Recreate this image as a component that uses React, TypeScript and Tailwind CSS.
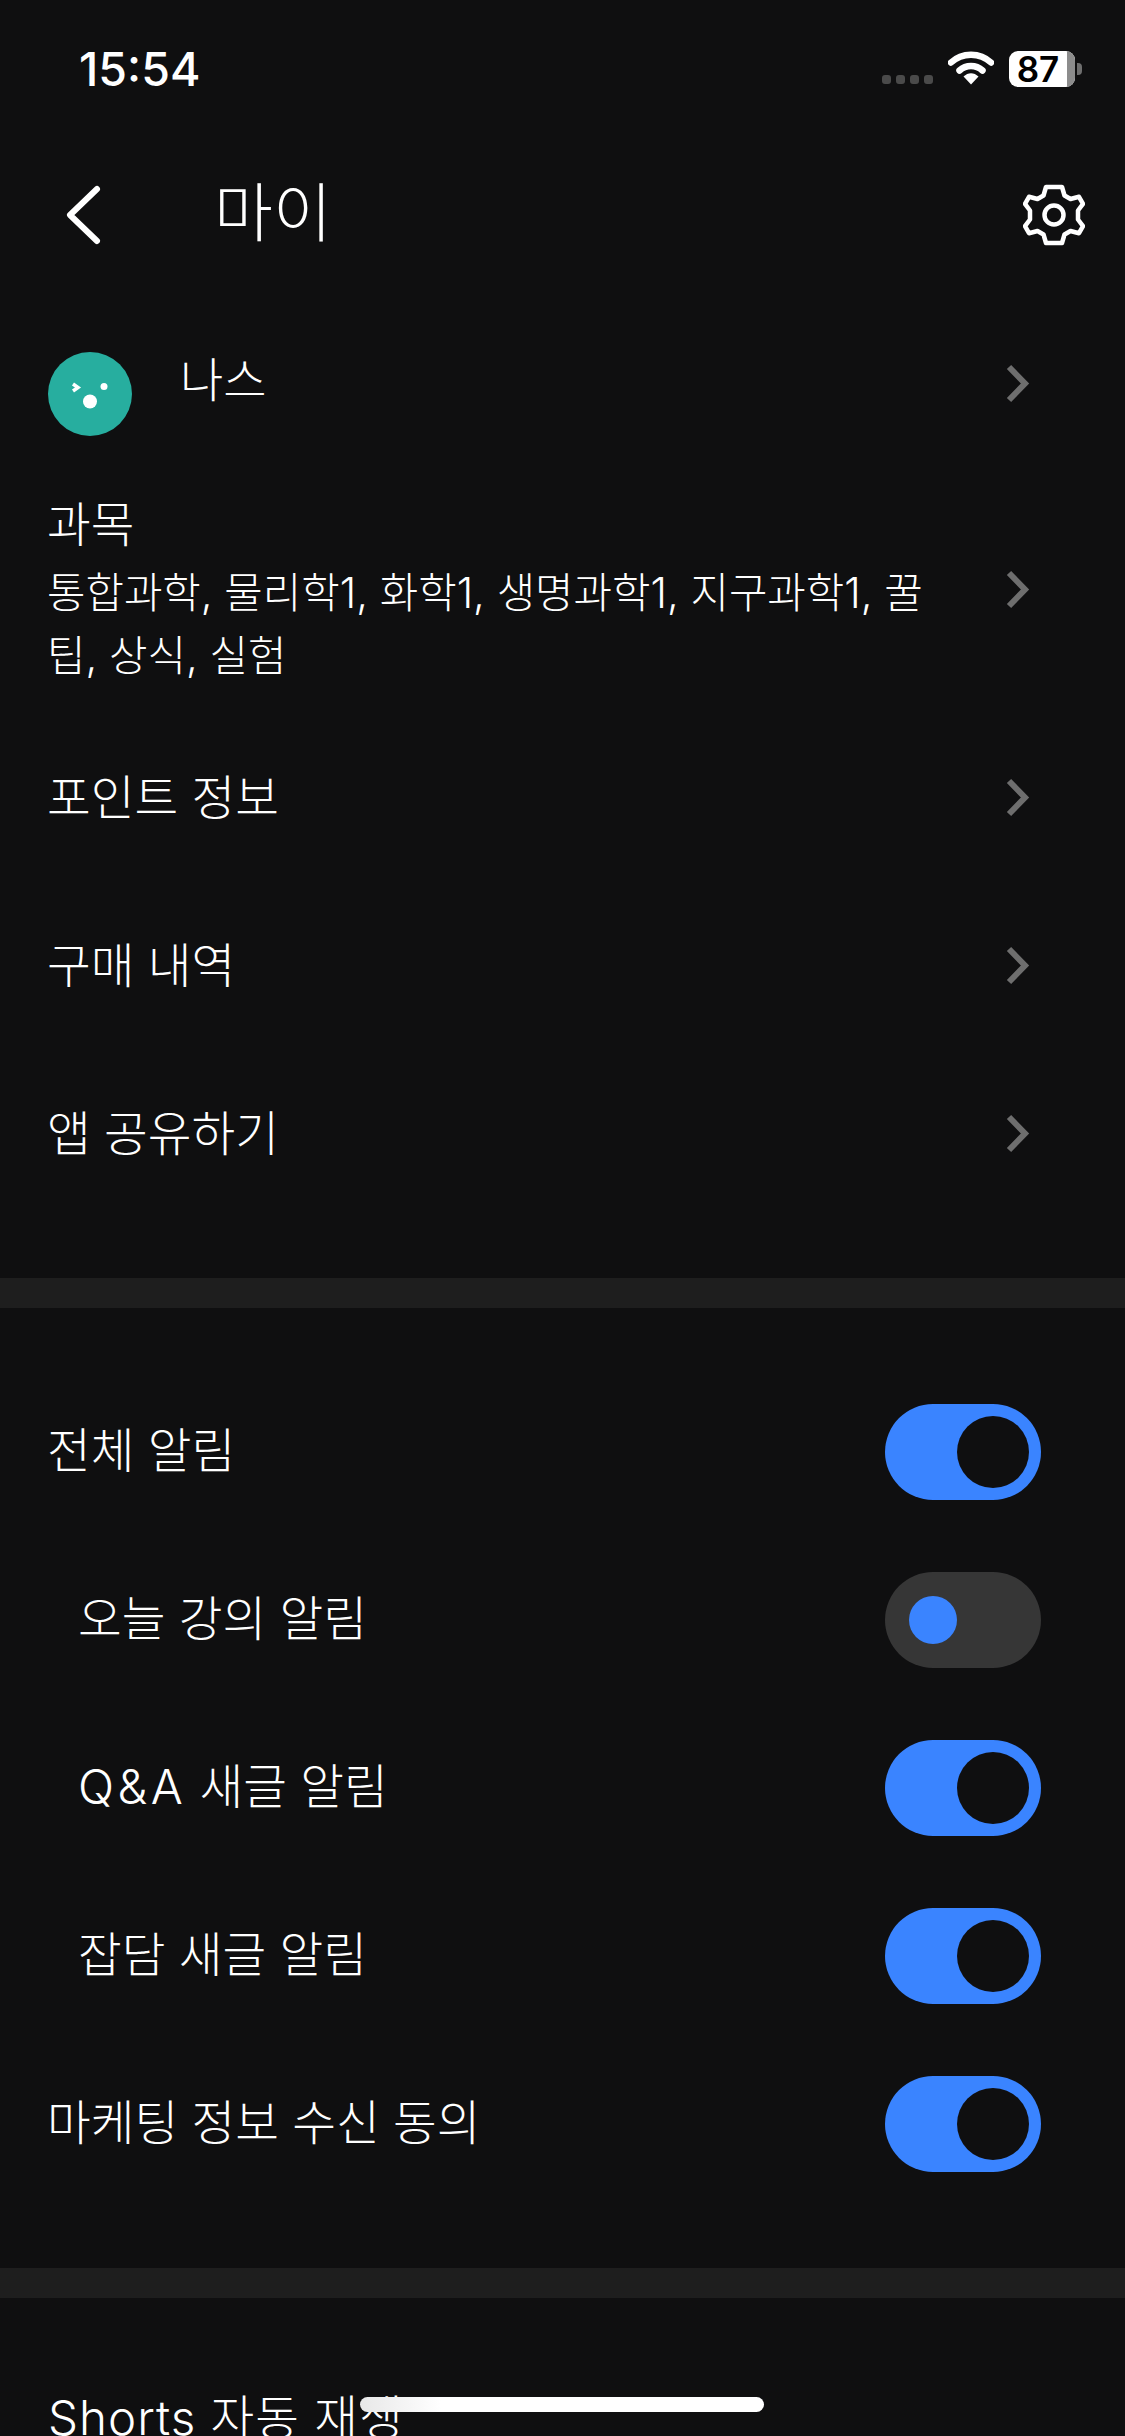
import type { ReactNode } from "react";

function Chevron({ className = "" }: { className?: string }) {
  return (
    <svg width="27" height="41" viewBox="0 0 27 41" fill="none" className={`shrink-0 ${className}`}>
      <path d="M5 4 L21 20.5 L5 37" stroke="#6e6e6e" strokeWidth="6" />
    </svg>
  );
}

function Toggle({ on }: { on: boolean }) {
  if (on) {
    return (
      <div className="flex h-[96px] w-[156px] items-center justify-end rounded-full bg-[#3a84ff] pr-[12px]">
        <div className="h-[72px] w-[72px] rounded-full bg-[#0f0f10]" />
      </div>
    );
  }
  return (
    <div className="flex h-[96px] w-[156px] items-center rounded-full bg-[#363636] pl-[24px]">
      <div className="h-[48px] w-[48px] rounded-full bg-[#3a84ff]" />
    </div>
  );
}

function LinkRow({ label }: { label: string }) {
  return (
    <div className="flex h-[168px] items-center justify-between pl-[47px] pr-[94px]">
      <span className="mt-[2px] text-[47.5px] font-light">{label}</span>
      <Chevron />
    </div>
  );
}

function ToggleRow({ label, on, sub }: { label: ReactNode; on: boolean; sub?: boolean }) {
  return (
    <div className={`flex h-[168px] items-center justify-between pr-[84px] ${sub ? "pl-[78px]" : "pl-[47px]"}`}>
      <span className="mt-[-2px] text-[47.5px] font-light">{label}</span>
      <Toggle on={on} />
    </div>
  );
}

export default function App() {
  return (
    <main className="relative h-[2436px] w-[1125px] overflow-hidden bg-[#0f0f10] font-['Inter','Noto_Sans_CJK_KR',sans-serif] text-white">
      {/* status bar */}
      <div className="flex h-[136px] items-start justify-between pl-[79px] pr-[43px] pt-[41px]">
        <span className="font-['Inter',sans-serif] text-[46.5px] font-medium leading-[56px]">15:54</span>
        <div className="flex items-start pt-[10px]">
          <div className="mr-[15px] mt-[24px] flex gap-[5px]">
            <div className="h-[9px] w-[9px] rounded-[3px] bg-[#4a4a4a]" />
            <div className="h-[9px] w-[9px] rounded-[3px] bg-[#4a4a4a]" />
            <div className="h-[9px] w-[9px] rounded-[3px] bg-[#4a4a4a]" />
            <div className="h-[9px] w-[9px] rounded-[3px] bg-[#4a4a4a]" />
          </div>
          <svg width="46" height="34" viewBox="0 0 46 34" fill="none" className="mr-[15px]">
            <path d="M3 11.5 C14 1 32 1 43 11.5" stroke="#fff" strokeWidth="6.5" strokeLinecap="round" />
            <path d="M11.5 19.5 C18 13.5 28 13.5 34.5 19.5" stroke="#fff" strokeWidth="6.5" strokeLinecap="round" />
            <path d="M15.5 25.5 C20 21 26 21 30.5 25.5 L23 33.5 Z" fill="#fff" />
          </svg>
          <div className="flex h-[36px] w-[66px] overflow-hidden rounded-[9px] bg-white">
            <div className="w-[58px] text-center font-['Inter',sans-serif] text-[35px] font-semibold leading-[36px] text-black">87</div>
            <div className="w-[8px] bg-[#8c8c8c]" />
          </div>
          <div className="ml-[2px] mt-[12px] h-[12px] w-[5px] rounded-r-[4px] bg-[#6e6e6e]" />
        </div>
      </div>

      {/* header */}
      <div className="flex h-[152px] items-center justify-between pl-[64px] pr-[40px]">
        <div className="flex items-center pt-[6px]">
          <svg width="40" height="64" viewBox="0 0 40 64" fill="none">
            <path d="M33 6 L6 32 L33 58" stroke="#fff" strokeWidth="6" strokeLinecap="round" strokeLinejoin="round" />
          </svg>
          <span className="ml-[110px] mt-[-4px] text-[64px] font-light leading-none">마이</span>
        </div>
        <svg width="62" height="64" viewBox="0 0 62 64" fill="none" className="mt-[6px]">
          <path
            d="M23 4 H39 L41.5 12.5 L47.5 16 L56 13.8 L60 20.8 L55 27.5 V36.5 L60 43.2 L56 50.2 L47.5 48 L41.5 51.5 L39 60 H23 L20.5 51.5 L14.5 48 L6 50.2 L2 43.2 L7 36.5 V27.5 L2 20.8 L6 13.8 L14.5 16 L20.5 12.5 Z"
            stroke="#fff"
            strokeWidth="4.5"
            strokeLinejoin="round"
          />
          <circle cx="31" cy="32" r="9.5" stroke="#fff" strokeWidth="4.5" />
        </svg>
      </div>

      {/* profile */}
      <div className="flex h-[148px] items-start justify-between pl-[48px] pr-[94px] pt-[64px]">
        <div className="flex items-start">
          <svg width="84" height="84" viewBox="0 0 84 84">
            <circle cx="42" cy="42" r="42" fill="#27ae9f" />
            <path d="M25 32 L30 35.5 L25 39" stroke="#fff" strokeWidth="3.5" fill="none" />
            <circle cx="56" cy="34.5" r="3.5" fill="#fff" />
            <circle cx="42" cy="49.5" r="7" fill="#fff" />
          </svg>
          <span className="ml-[48px] mt-[-12px] text-[47px] font-light leading-[80px]">나스</span>
        </div>
        <Chevron className="mt-[11px]" />
      </div>

      {/* subjects */}
      <div className="flex items-center justify-between pl-[47px] pr-[94px] pt-[55px]">
        <div className="w-[890px]">
          <div className="mb-[3px] text-[47.5px] font-light leading-[68px]">과목</div>
          <div className="text-[41.8px] font-light leading-[63px]">
            통합과학, 물리학1, 화학1, 생명과학1, 지구과학1, 꿀팁, 상식, 실험
          </div>
        </div>
        <Chevron />
      </div>

      <div className="pt-[25px]">
        <LinkRow label="포인트 정보" />
        <LinkRow label="구매 내역" />
        <LinkRow label="앱 공유하기" />
      </div>

      <div className="mt-[61px] h-[30px] bg-[#1e1e1e]" />

      <div className="py-[60px]">
        <ToggleRow label="전체 알림" on />
        <ToggleRow label="오늘 강의 알림" on={false} sub />
        <ToggleRow label={<><span className="tracking-[3.5px]">Q&A</span> 새글 알림</>} on sub />
        <ToggleRow label="잡담 새글 알림" on sub />
        <ToggleRow label="마케팅 정보 수신 동의" on />
      </div>

      <div className="h-[30px] bg-[#1e1e1e]" />

      <div className="pl-[48px] pt-[88px]">
        <span className="text-[47.5px] font-light leading-[64px] tracking-[1px]">Shorts 자동 재생</span>
      </div>

      {/* home indicator */}
      <div className="absolute left-[360px] top-[2397px] h-[15px] w-[404px] rounded-[8px] bg-linear-to-r from-[#e8e8e8] to-white to-[20%]" />
    </main>
  );
}
